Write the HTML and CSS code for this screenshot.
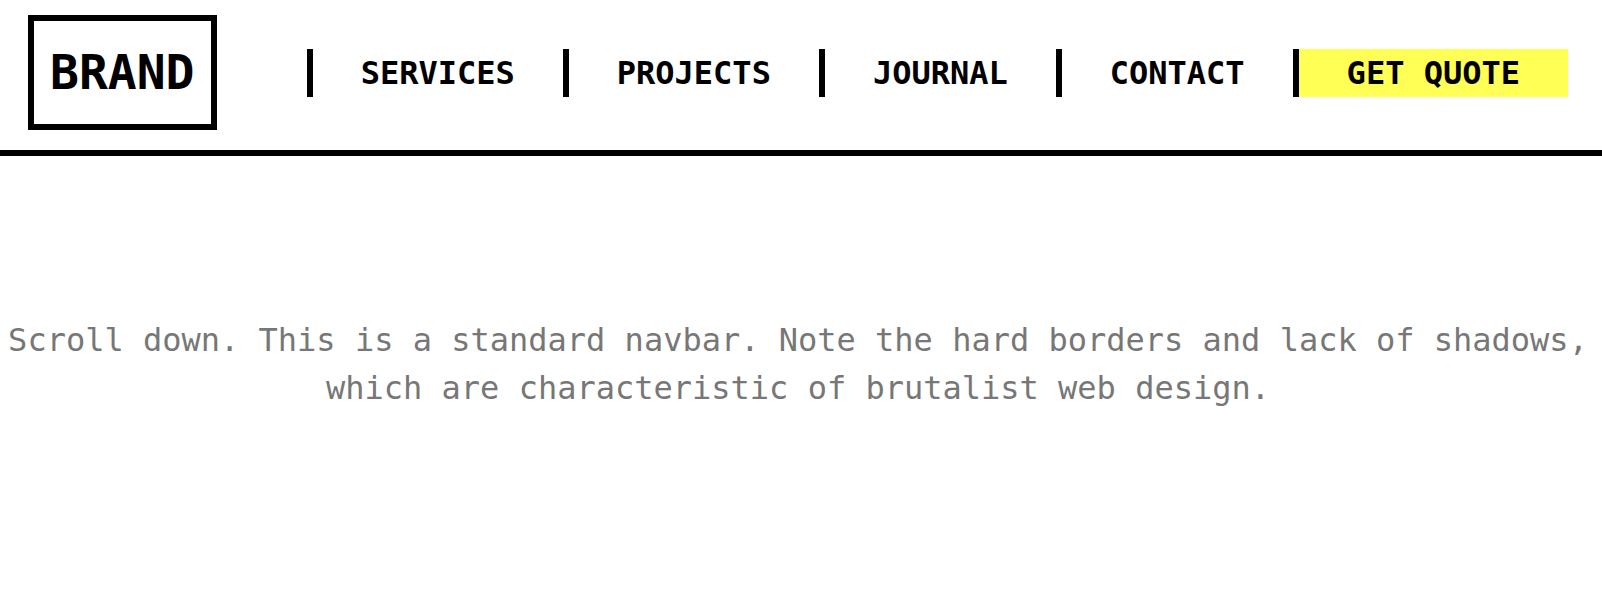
FILE: index.html
```html
<!DOCTYPE html>
<html lang="en">
<head>
<meta charset="utf-8">
<title>Brand</title>
<link rel="stylesheet" href="styles.css">
</head>
<body>
  <header class="site-header">
    <a class="brand" href="#">BRAND</a>
    <nav class="main-nav">
      <a class="nav-link" href="#">SERVICES</a>
      <a class="nav-link" href="#">PROJECTS</a>
      <a class="nav-link" href="#">JOURNAL</a>
      <a class="nav-link" href="#">CONTACT</a>
      <a class="nav-link nav-cta" href="#">GET QUOTE</a>
    </nav>
  </header>
  <main class="intro">
    <p class="intro-text">Scroll down. This is a standard navbar. Note the hard borders and lack of shadows, which are characteristic of brutalist web design.</p>
  </main>
</body>
</html>
```

FILE: styles.css
```css
* {
  box-sizing: border-box;
}

html, body {
  margin: 0;
  padding: 0;
  background: #ffffff;
}

body {
  font-family: "DejaVu Sans Mono", monospace;
  color: #000000;
}

a {
  color: inherit;
  text-decoration: none;
}

/* Header: hard bottom rule, no shadow */
.site-header {
  display: flex;
  align-items: center;
  justify-content: space-between;
  padding: 15px 34px 20px 28px;
  border-bottom: 6px solid #000000;
}

.brand {
  display: block;
  border: 6px solid #000000;
  padding: 16px;
  font-family: "DejaVu Sans Mono", monospace;
  font-weight: 700;
  font-size: 48px;
  line-height: 71px;
}

.main-nav {
  display: flex;
}

.nav-link {
  display: block;
  border-left: 6px solid #000000;
  padding: 0 48px;
  font-family: "DejaVu Sans Mono", monospace;
  font-weight: 700;
  font-size: 32px;
  line-height: 48px;
}

.nav-cta {
  background: #ffff55;
}

/* Intro copy */
.intro {
  padding: 160px 8px 0 2px;
}

.intro-text {
  margin: 0;
  text-align: center;
  font-size: 32px;
  line-height: 48px;
  color: #777777;
}
```
